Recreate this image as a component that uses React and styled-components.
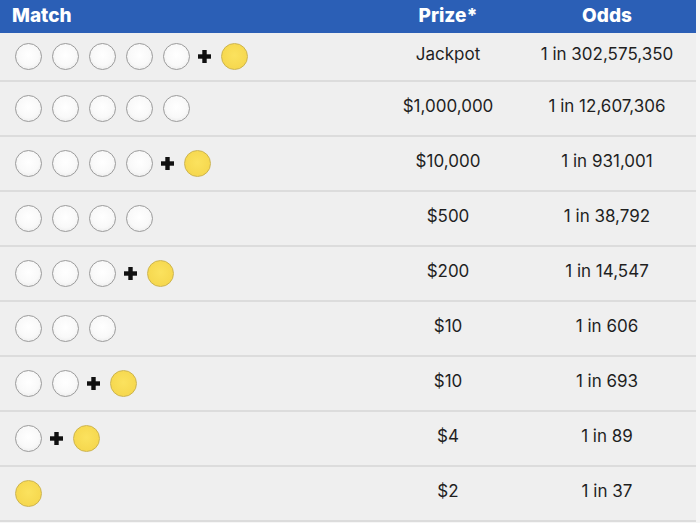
import React from "react";
import styled, { createGlobalStyle } from "styled-components";

const GlobalStyle = createGlobalStyle`
  html, body {
    margin: 0;
    padding: 0;
    background: #f6f6f6;
  }
  body {
    font-family: Inter, "Open Sans", "Liberation Sans", sans-serif;
    color: #1f1f1f;
  }
`;

const Table = styled.div`
  width: 696px;
  background: #efefef;
`;

const Header = styled.div`
  display: grid;
  grid-template-columns: 378px 140px 178px;
  align-items: center;
  height: 33px;
  background: #2b5fb6;
  color: #fff;
  font-weight: 800;
  font-size: 19px;
`;

const HeadCell = styled.div`
  text-align: ${(p) => (p.left ? "left" : "center")};
  padding-left: ${(p) => (p.left ? "12px" : "0")};
  padding-bottom: 3px;
`;

const Row = styled.div`
  display: grid;
  grid-template-columns: 378px 140px 178px;
  align-items: center;
  height: ${(p) => (p.first ? "47px" : "53px")};
  border-bottom: 2px solid #dcdcdc;
`;

const Balls = styled.div`
  display: flex;
  align-items: center;
  gap: 10px;
  padding-left: 15px;
`;

const Ball = styled.span`
  display: block;
  box-sizing: border-box;
  width: 27px;
  height: 27px;
  border-radius: 50%;
  border: 1.5px solid ${(p) => (p.power ? "#cdb44e" : "#9c9c9c")};
  background: ${(p) =>
    p.power
      ? "radial-gradient(circle at 50% 45%, #fbe25e 0%, #f6d84f 70%, #efd04c 100%)"
      : "radial-gradient(circle at 50% 45%, #ffffff 0%, #f9f9f9 55%, #e2e2e2 100%)"};
`;

const Plus = styled.svg`
  display: block;
  width: 13px;
  height: 13px;
  margin-left: -2px;
`;

const Cell = styled.div`
  text-align: center;
  font-size: 17px;
  font-weight: 400;
  color: #1f1f1f;
  padding-bottom: 5px;
`;

const rows = [
  { white: 5, power: true, prize: "Jackpot", odds: "1 in 302,575,350" },
  { white: 5, power: false, prize: "$1,000,000", odds: "1 in 12,607,306" },
  { white: 4, power: true, prize: "$10,000", odds: "1 in 931,001" },
  { white: 4, power: false, prize: "$500", odds: "1 in 38,792" },
  { white: 3, power: true, prize: "$200", odds: "1 in 14,547" },
  { white: 3, power: false, prize: "$10", odds: "1 in 606" },
  { white: 2, power: true, prize: "$10", odds: "1 in 693" },
  { white: 1, power: true, prize: "$4", odds: "1 in 89" },
  { white: 0, power: true, prize: "$2", odds: "1 in 37" },
];

const PlusIcon = () => (
  <Plus viewBox="0 0 13 13">
    <rect x="4.3" y="0" width="4.4" height="13" fill="#111" />
    <rect x="0" y="4.3" width="13" height="4.4" fill="#111" />
  </Plus>
);

export default function App() {
  return (
    <>
      <GlobalStyle />
      <Table>
        <Header>
          <HeadCell left>Match</HeadCell>
          <HeadCell>Prize*</HeadCell>
          <HeadCell>Odds</HeadCell>
        </Header>
        {rows.map((r, i) => (
          <Row key={i} first={i === 0}>
            <Balls>
              {Array.from({ length: r.white }).map((_, j) => (
                <Ball key={j} />
              ))}
              {r.power && r.white > 0 && <PlusIcon />}
              {r.power && <Ball power />}
            </Balls>
            <Cell>{r.prize}</Cell>
            <Cell>{r.odds}</Cell>
          </Row>
        ))}
      </Table>
    </>
  );
}
